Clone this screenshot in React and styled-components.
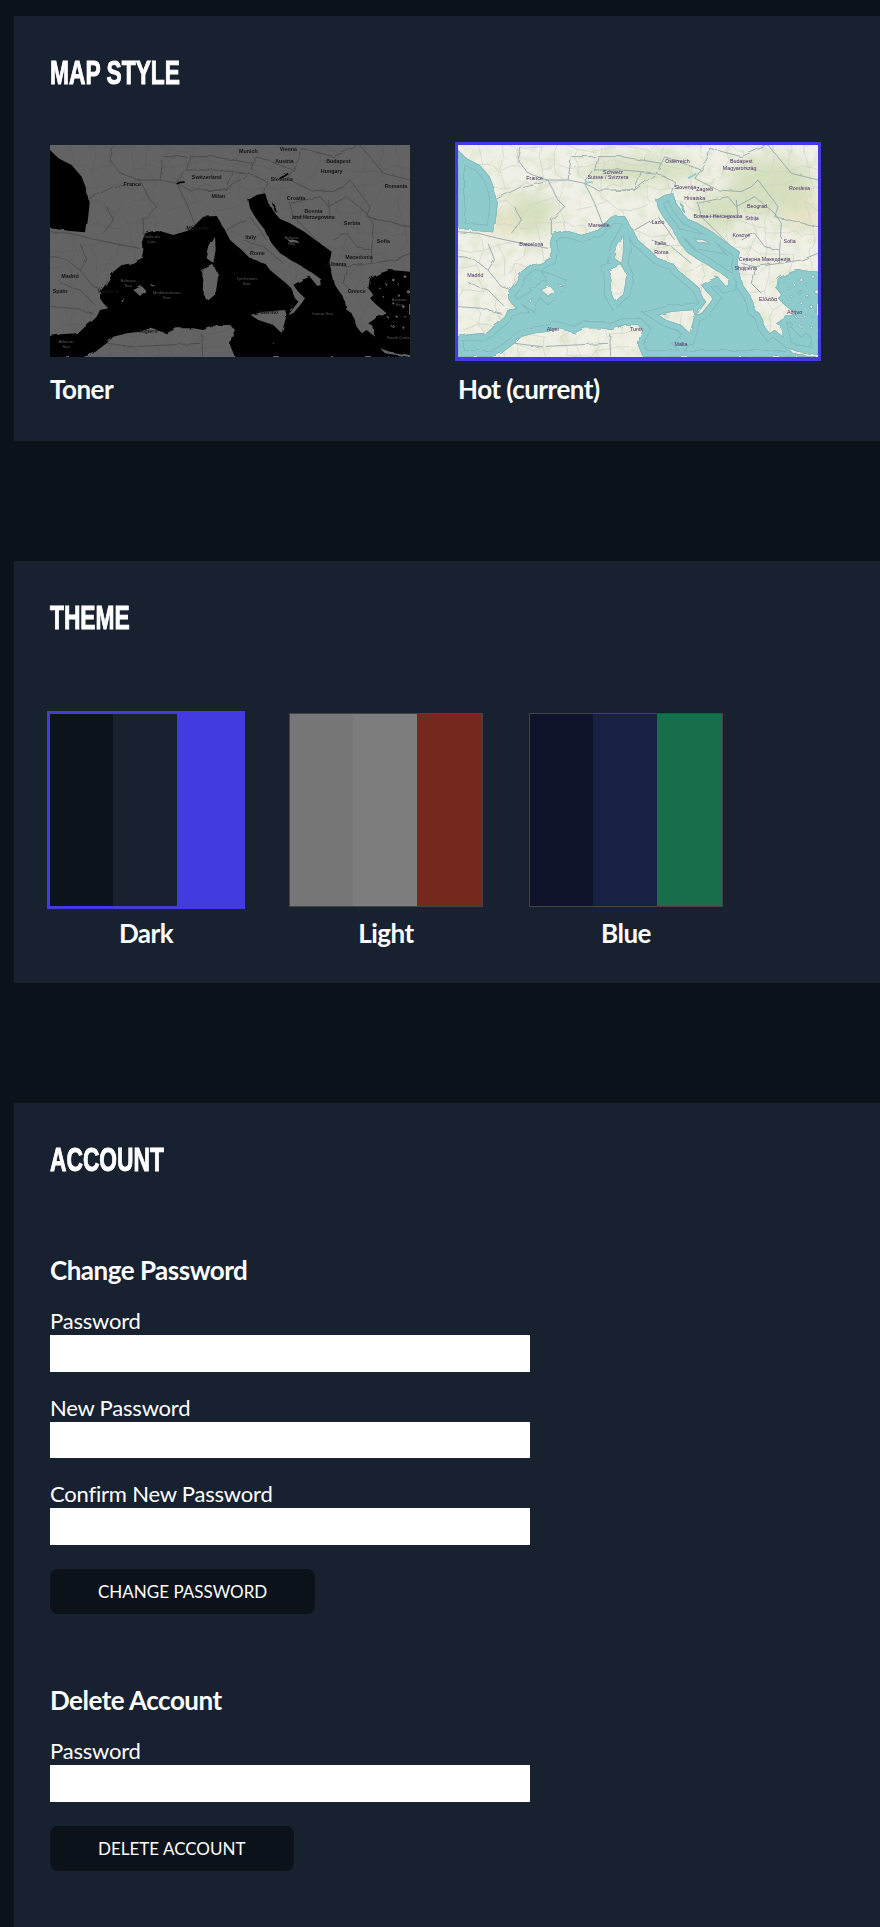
import React from 'react';
import styled, { createGlobalStyle } from 'styled-components';

const GlobalStyle = createGlobalStyle`
  html, body {
    margin: 0;
    padding: 0;
    background-color: #0c1219;
    color: #fff;
    font-family: Lato, "Noto Sans", sans-serif;
  }
`;

const Page = styled.div`
  width: 880px;
  height: 1927px;
  overflow: hidden;
  padding-top: 16px;
  box-sizing: border-box;
`;

const Panel = styled.section`
  margin: 0 0 120px 14px;
  padding: 36px 0 0 36px;
  height: ${props => props.$height}px;
  box-sizing: border-box;
  background-color: #18212f;
`;

// no condensed face is installed, so the bold sans is squeezed and thickened a little
const Title = styled.h2`
  margin: 0;
  height: 43px;
  font-family: "Liberation Sans", sans-serif;
  font-size: 34px;
  line-height: 40px;
  font-weight: 700;
  text-transform: uppercase;
  transform: scaleX(0.67);
  transform-origin: left center;
  -webkit-text-stroke: 1px #fff;
`;

const MapRow = styled.div`
  display: flex;
  gap: 42px;
  margin: 47px 0 0 -3px;
`;

const MapCard = styled.div`
  width: 366px;
`;

const MapFrame = styled.div`
  width: 360px;
  height: 212px;
  border: 3px solid ${props => (props.$selected ? '#433bdf' : 'transparent')};
  border-bottom-width: 4px;

  svg {
    display: block;
  }
`;

const CardLabel = styled.div`
  margin: 12px 0 0 3px;
  font-size: 26px;
  line-height: 32px;
  font-weight: 700;
  letter-spacing: -0.5px;
`;

const ThemeRow = styled.div`
  display: flex;
  margin: 71px 0 0 -24px;
`;

const ThemeItem = styled.div`
  width: 240px;
  display: flex;
  flex-direction: column;
  align-items: center;
`;

const SwatchSlot = styled.div`
  height: 198px;
  display: flex;
  align-items: center;
`;

const Swatch = styled.div`
  display: grid;
  grid-template-columns: 63px 64px 65px;
  height: 192px;
  border: ${props => (props.$selected ? '3px solid #433bdf' : '1px solid #444')};
`;

const SwatchColumn = styled.div`
  background-color: ${props => props.$color};
`;

const ThemeLabel = styled.div`
  margin-top: 8px;
  font-size: 26px;
  line-height: 32px;
  font-weight: 700;
  letter-spacing: -0.5px;
`;

const FormBlock = styled.form`
  margin-top: ${props => props.$top}px;
`;

const FormTitle = styled.h3`
  margin: 0 0 20px;
  font-size: 26px;
  line-height: 32px;
  font-weight: 700;
  letter-spacing: -0.5px;
`;

const Field = styled.label`
  display: block;
  margin-bottom: 21px;
`;

const FieldLabel = styled.span`
  display: block;
  font-size: 22px;
  line-height: 29px;
  letter-spacing: -0.2px;
`;

const TextInput = styled.input`
  display: block;
  width: 480px;
  height: 36.5px;
  padding: 0;
  border: 0;
  border-radius: 0;
  background-color: #fff;
`;

const SubmitButton = styled.button`
  display: block;
  height: 45px;
  margin-top: 24.5px;
  padding: 0 48px;
  border: 0;
  border-radius: 8px;
  background-color: #0c1219;
  color: #fff;
  font-family: Lato, "Noto Sans", sans-serif;
  font-size: 17px;
  text-transform: uppercase;
`;

// Map geometry is in a 1080x636 space, three units to a pixel of the thumbnail
const line = points => `M${points.map(p => p.join(' ')).join(' L')} Z`;

const MED_SEA = [
  [0, 573], [40, 567], [85, 565], [100, 550], [125, 530], [140, 515], [150, 495], [175, 490], [160, 475], [150, 460],
  [150, 440], [170, 415], [190, 380], [215, 360], [245, 355], [275, 340], [280, 315], [278, 285], [285, 265], [320, 255],
  [370, 270], [420, 255], [460, 215], [500, 213], [525, 255], [540, 285], [575, 315], [600, 340], [645, 355], [660, 375],
  [690, 400], [720, 425], [735, 460], [745, 470], [730, 490], [715, 510], [730, 505], [755, 475], [765, 460], [745, 440],
  [730, 420], [755, 405], [780, 395], [802, 423], [812, 420], [810, 400], [780, 380], [740, 355], [690, 325], [665, 295],
  [640, 250], [615, 215], [600, 190], [595, 165], [620, 150], [645, 145], [650, 160], [655, 175], [675, 205], [690, 222],
  [720, 235], [765, 262], [800, 288], [830, 310], [845, 320], [838, 355], [845, 380], [855, 420], [875, 450], [885, 470],
  [890, 495], [905, 505], [920, 545], [935, 565], [950, 555], [975, 575], [970, 545], [955, 535], [985, 515], [1000, 510],
  [1010, 505], [980, 480], [960, 460], [970, 450], [955, 430], [960, 400], [990, 385], [1020, 375], [1080, 380], [1080, 636],
  [555, 636], [540, 600], [545, 575], [555, 555], [540, 540], [500, 540], [460, 555], [430, 550], [380, 550], [350, 565],
  [300, 550], [270, 560], [230, 565], [190, 575], [170, 595], [130, 625], [100, 636], [0, 636],
];

const BISCAY = [
  [0, 15], [25, 40], [65, 60], [95, 95], [110, 135], [116, 170], [112, 210], [105, 262], [60, 258], [0, 250],
];

const ISLANDS = [
  [[470, 340], [478, 305], [495, 275], [497, 315], [490, 355]],
  [[452, 375], [490, 360], [505, 390], [498, 440], [470, 465], [458, 445], [460, 405]],
  [[250, 435], [275, 423], [288, 437], [270, 453]],
  [[300, 417], [318, 424], [305, 424]],
  [[210, 467], [222, 460], [218, 472]],
  [[602, 510], [640, 500], [705, 495], [710, 510], [695, 565], [670, 540], [625, 525]],
  [[990, 610], [1020, 620], [1080, 630], [1080, 636], [1005, 625]],
  [[665, 172], [672, 178], [682, 205], [674, 198]],
  [[710, 282], [745, 290], [752, 298], [720, 292]],
];

const SPECKS = [
  [1030, 405, 5], [1045, 418, 4], [1010, 420, 4], [1065, 395, 5], [1030, 475, 4], [1060, 485, 5], [1012, 515, 3],
  [1040, 515, 4], [1065, 515, 3], [1030, 545, 5], [1060, 548, 4], [1050, 455, 4], [1075, 440, 6], [990, 430, 3],
  [1000, 455, 3], [1075, 500, 3], [670, 595, 2],
];

const SPECK_SHAPES = SPECKS.map(([x, y, r]) => [[x - r, y], [x, y - r], [x + r, y], [x, y + r]]);
const SEA_PATH = [MED_SEA, BISCAY, ...ISLANDS, ...SPECK_SHAPES].map(line).join(' ');

const LAKES = ['690,100 705,92 715,85', '380,116 392,112 404,111'];

// small seeded generator, so the thin region lines stay the same on every load
const seeded = seed => () => {
  seed = (seed * 16807) % 2147483647;
  return seed / 2147483647;
};

const buildMesh = () => {
  const rand = seeded(4217);
  const step = 62;
  const nodes = [];
  for (let row = 0; row <= 11; row += 1) {
    for (let col = 0; col <= 18; col += 1) {
      nodes.push([col * step + (rand() - 0.5) * 44, row * step + (rand() - 0.5) * 44]);
    }
  }
  const lines = [];
  nodes.forEach((node, i) => {
    const right = (i + 1) % 19 !== 0 ? nodes[i + 1] : null;
    const down = nodes[i + 19];
    if (right && rand() > 0.35) lines.push([node, right]);
    if (down && rand() > 0.35) lines.push([node, down]);
  });
  return lines.map(([a, b]) => {
    const mid = [(a[0] + b[0]) / 2 + (rand() - 0.5) * 24, (a[1] + b[1]) / 2 + (rand() - 0.5) * 24];
    return `M${a.join(' ')} L${mid.join(' ')} L${b.join(' ')}`;
  }).join(' ');
};

const MESH_PATH = buildMesh();

// Country borders and labels, kept in page-like coordinates and shifted as a group
const BORDERS = [
  '150,695 210,700 270,715 340,730 420,745',
  '150,770 200,780 240,810 280,860 310,870',
  '240,730 260,780 240,810',
  '150,920 220,925 280,940',
  '280,590 340,560 420,540 480,540 530,550',
  '320,620 340,660 310,700',
  '420,540 450,600 470,620 430,660 430,705',
  '340,440 330,480 360,520 420,540',
  '530,550 560,510 640,510 700,515 680,570 620,570 570,570 530,550',
  '560,510 570,470 640,470 760,490 770,470 880,510 860,535',
  '530,550 560,610 585,675',
  '620,570 680,570 745,520 800,545 790,578',
  '880,510 900,480 905,445 1000,470 1080,435',
  '860,535 930,570 1000,575 1030,560 1050,540',
  '1050,540 1110,620 1100,650 1230,680',
  '870,610 960,590 985,620 1040,590 1100,640 1120,670 1115,750',
  '870,610 880,650 990,760',
  '880,650 990,650 985,600',
  '1000,720 1040,700 1070,740 1115,750 1115,790 1040,800 1000,790',
  '1040,800 1030,850 1060,880',
  '1115,790 1180,780 1230,760',
  '680,690 750,650 800,720',
  '730,720 790,740 850,790',
  '605,1000 608,1070',
  '320,1030 400,1040 600,1030',
  '200,560 260,600 280,590',
  '480,540 490,470 560,470',
  '760,490 745,520 700,515',
  '1230,540 1150,520 1080,435',
  '180,850 240,870 290,920',
];

const TONER_LABELS = [
  ['France', 397, 558], ['Switzerland', 620, 537], ['Austria', 853, 488], ['Munich', 745, 458], ['Vienna', 865, 454],
  ['Budapest', 1015, 490], ['Hungary', 995, 520], ['Romania', 1188, 565], ['Slovenia', 845, 542], ['Croatia', 888, 599],
  ['Bosnia', 940, 638], ['and Herzegovina', 940, 657], ['Serbia', 1056, 674], ['Macedonia', 1077, 778], ['Greece', 1070, 880],
  ['Albania', 1010, 798], ['Italy', 752, 718], ['Rome', 772, 766], ['Milan', 655, 595], ['Madrid', 210, 835], ['Spain', 180, 880],
  ['Sofia', 1150, 728], ['Algiers', 445, 999], ['Palermo', 803, 942], ['Valencia', 325, 880], ['Marseille', 593, 689],
];

const TONER_SEA_LABELS = [
  ['Golfe du', 455, 714], ['Lion', 455, 730], ['Balearic', 385, 845], ['Sea', 385, 860], ['Mediterranean', 500, 882],
  ['Sea', 500, 896], ['Tyrrhenian', 740, 840], ['Sea', 740, 856], ['Adriatic', 875, 718], ['Sea', 875, 734],
  ['Ionian Sea', 968, 945], ['Alboran', 198, 1030], ['Sea', 198, 1045], ['Aegean', 1198, 903], ['Sea', 1198, 917],
  ['South Crete', 1195, 1018],
];

const HOT_LABELS = [
  ['Österreich', 808, 489], ['Budapest', 1000, 489], ['Magyarország', 995, 511], ['France', 380, 539], ['România', 1175, 571],
  ['Schweiz', 615, 521], ['Suisse / Svizzera', 600, 536], ['Slovenija', 832, 566], ['Zagreb', 890, 574], ['Hrvatska', 860, 601],
  ['Bosna i Hercegovina', 930, 654], ['Beograd', 1047, 624], ['Srbija', 1032, 661], ['Italia', 757, 734], ['Lazio', 750, 671],
  ['Roma', 760, 762], ['Marseille', 573, 682], ['Barcelona', 370, 739], ['Madrid', 202, 831], ['Shqipëria', 1013, 811],
  ['Ελλάδα', 1080, 902], ['Αθήνα', 1160, 941], ['Malta', 819, 1037], ['Tunis', 685, 994], ['Alger', 435, 994],
  ['Sofia', 1145, 728], ['Северна Македонија', 1070, 782], ['Kosovë', 1000, 711],
];

const PALETTES = {
  toner: {
    land: '#636363', sea: '#000', mesh: '#5c5c5c', border: '#464646', label: '#141414',
    labels: TONER_LABELS, seaLabels: TONER_SEA_LABELS, labelWeight: 700,
  },
  hot: {
    land: '#f0f0e6', sea: '#8ecbcc', mesh: '#cdd2c6', border: '#8b9fa8', boundary: '#80b6ba', coast: '#88b7b9', label: '#4a2f63',
    labels: HOT_LABELS, seaLabels: [], labelWeight: 400,
  },
};

const MapThumb = ({ variant }) => {
  const p = PALETTES[variant];
  return (
    <svg width="360" height="212" viewBox="0 0 1080 636" preserveAspectRatio="none">
      <defs>
        <clipPath id={`${variant}-sea`}>
          <path d={SEA_PATH} clipRule="evenodd" />
        </clipPath>
        <filter id={`${variant}-relief`} x="0" y="0" width="100%" height="100%">
          <feTurbulence type="fractalNoise" baseFrequency="0.03" numOctaves="3" seed="7" />
          <feColorMatrix values="0 0 0 0 0.64  0 0 0 0 0.74  0 0 0 0 0.5  0 0 0 2.6 -1.15" />
        </filter>
        <filter id={`${variant}-cloud`} x="-20%" y="-20%" width="140%" height="140%">
          <feGaussianBlur stdDeviation="24" />
        </filter>
        <filter id={`${variant}-rough`} x="0" y="0" width="100%" height="100%">
          <feTurbulence type="fractalNoise" baseFrequency="0.03" numOctaves="2" seed="3" result="noise" />
          <feDisplacementMap in="SourceGraphic" in2="noise" scale="10" />
          <feGaussianBlur stdDeviation="1.8" />
        </filter>
        <filter id={`${variant}-soft`} x="0" y="0" width="100%" height="100%">
          <feGaussianBlur stdDeviation="0.7" />
        </filter>
      </defs>
      <rect width="1080" height="636" fill={p.land} />
      <g filter={`url(#${variant}-rough)`}>
        {variant === 'hot' && (
          <>
            <g filter={`url(#${variant}-cloud)`} fill="#bfd2a0" opacity="0.55">
              <ellipse cx="550" cy="75" rx="170" ry="40" />
              <ellipse cx="940" cy="125" rx="130" ry="90" />
              <ellipse cx="780" cy="205" rx="70" ry="60" />
              <ellipse cx="220" cy="205" rx="70" ry="60" />
            </g>
            <g filter={`url(#${variant}-cloud)`} fill="#e4dcb8" opacity="0.7">
              <ellipse cx="140" cy="235" rx="50" ry="40" />
              <ellipse cx="1040" cy="205" rx="60" ry="50" />
            </g>
            <rect width="1080" height="636" filter={`url(#${variant}-relief)`} opacity="0.5" />
          </>
        )}
        <path d={MESH_PATH} fill="none" stroke={p.mesh} strokeWidth="2" />
        <g fill="none" stroke={p.border} strokeWidth="2.4" transform="translate(-150 -435)">
          {BORDERS.map(points => <polyline key={points} points={points} />)}
        </g>
        <path d={SEA_PATH} fillRule="evenodd" fill={p.sea} />
        {LAKES.map(points => (
          <polyline key={points} points={points} fill="none" stroke={p.sea} strokeWidth="5" />
        ))}
        {p.boundary && (
          <g clipPath={`url(#${variant}-sea)`} fill="none">
            <path d={SEA_PATH} stroke={p.boundary} strokeWidth="42" />
            <path d={SEA_PATH} stroke={p.sea} strokeWidth="37" />
            <path d={SEA_PATH} stroke={p.coast} strokeWidth="4" />
          </g>
        )}
      </g>
      <g
        filter={`url(#${variant}-soft)`}
        transform="translate(-150 -435)"
        fontFamily="'Liberation Sans', sans-serif"
        fontSize="16"
        textAnchor="middle"
      >
        <g fill={p.label} fontWeight={p.labelWeight}>
          {p.labels.map(([name, x, y]) => <text key={name} x={x} y={y}>{name}</text>)}
        </g>
        <g fill="#5a5a5a" fontSize="13">
          {p.seaLabels.map(([name, x, y]) => <text key={`${name}-${x}`} x={x} y={y}>{name}</text>)}
        </g>
      </g>
    </svg>
  );
};

const THEMES = [
  { name: 'Dark', colors: ['#0d131a', '#18212f', '#433bdf'], selected: true },
  { name: 'Light', colors: ['#777777', '#7d7d7d', '#74281e'] },
  { name: 'Blue', colors: ['#10142a', '#182044', '#186d4a'] },
];

const App = () => (
  <Page>
    <GlobalStyle />
    <Panel $height={425}>
      <Title>Map Style</Title>
      <MapRow>
        <MapCard>
          <MapFrame><MapThumb variant="toner" /></MapFrame>
          <CardLabel>Toner</CardLabel>
        </MapCard>
        <MapCard>
          <MapFrame $selected><MapThumb variant="hot" /></MapFrame>
          <CardLabel>Hot (current)</CardLabel>
        </MapCard>
      </MapRow>
    </Panel>

    <Panel $height={422}>
      <Title>Theme</Title>
      <ThemeRow>
        {THEMES.map(theme => (
          <ThemeItem key={theme.name}>
            <SwatchSlot>
              <Swatch $selected={theme.selected}>
                {theme.colors.map(color => <SwatchColumn key={color} $color={color} />)}
              </Swatch>
            </SwatchSlot>
            <ThemeLabel>{theme.name}</ThemeLabel>
          </ThemeItem>
        ))}
      </ThemeRow>
    </Panel>

    <Panel $height={824}>
      <Title>Account</Title>
      <FormBlock $top={72}>
        <FormTitle>Change Password</FormTitle>
        <Field><FieldLabel>Password</FieldLabel><TextInput type="password" /></Field>
        <Field><FieldLabel>New Password</FieldLabel><TextInput type="password" /></Field>
        <Field><FieldLabel>Confirm New Password</FieldLabel><TextInput type="password" /></Field>
        <SubmitButton type="button">Change Password</SubmitButton>
      </FormBlock>
      <FormBlock $top={70}>
        <FormTitle>Delete Account</FormTitle>
        <Field><FieldLabel>Password</FieldLabel><TextInput type="password" /></Field>
        <SubmitButton type="button">Delete Account</SubmitButton>
      </FormBlock>
    </Panel>
  </Page>
);

export default App;
